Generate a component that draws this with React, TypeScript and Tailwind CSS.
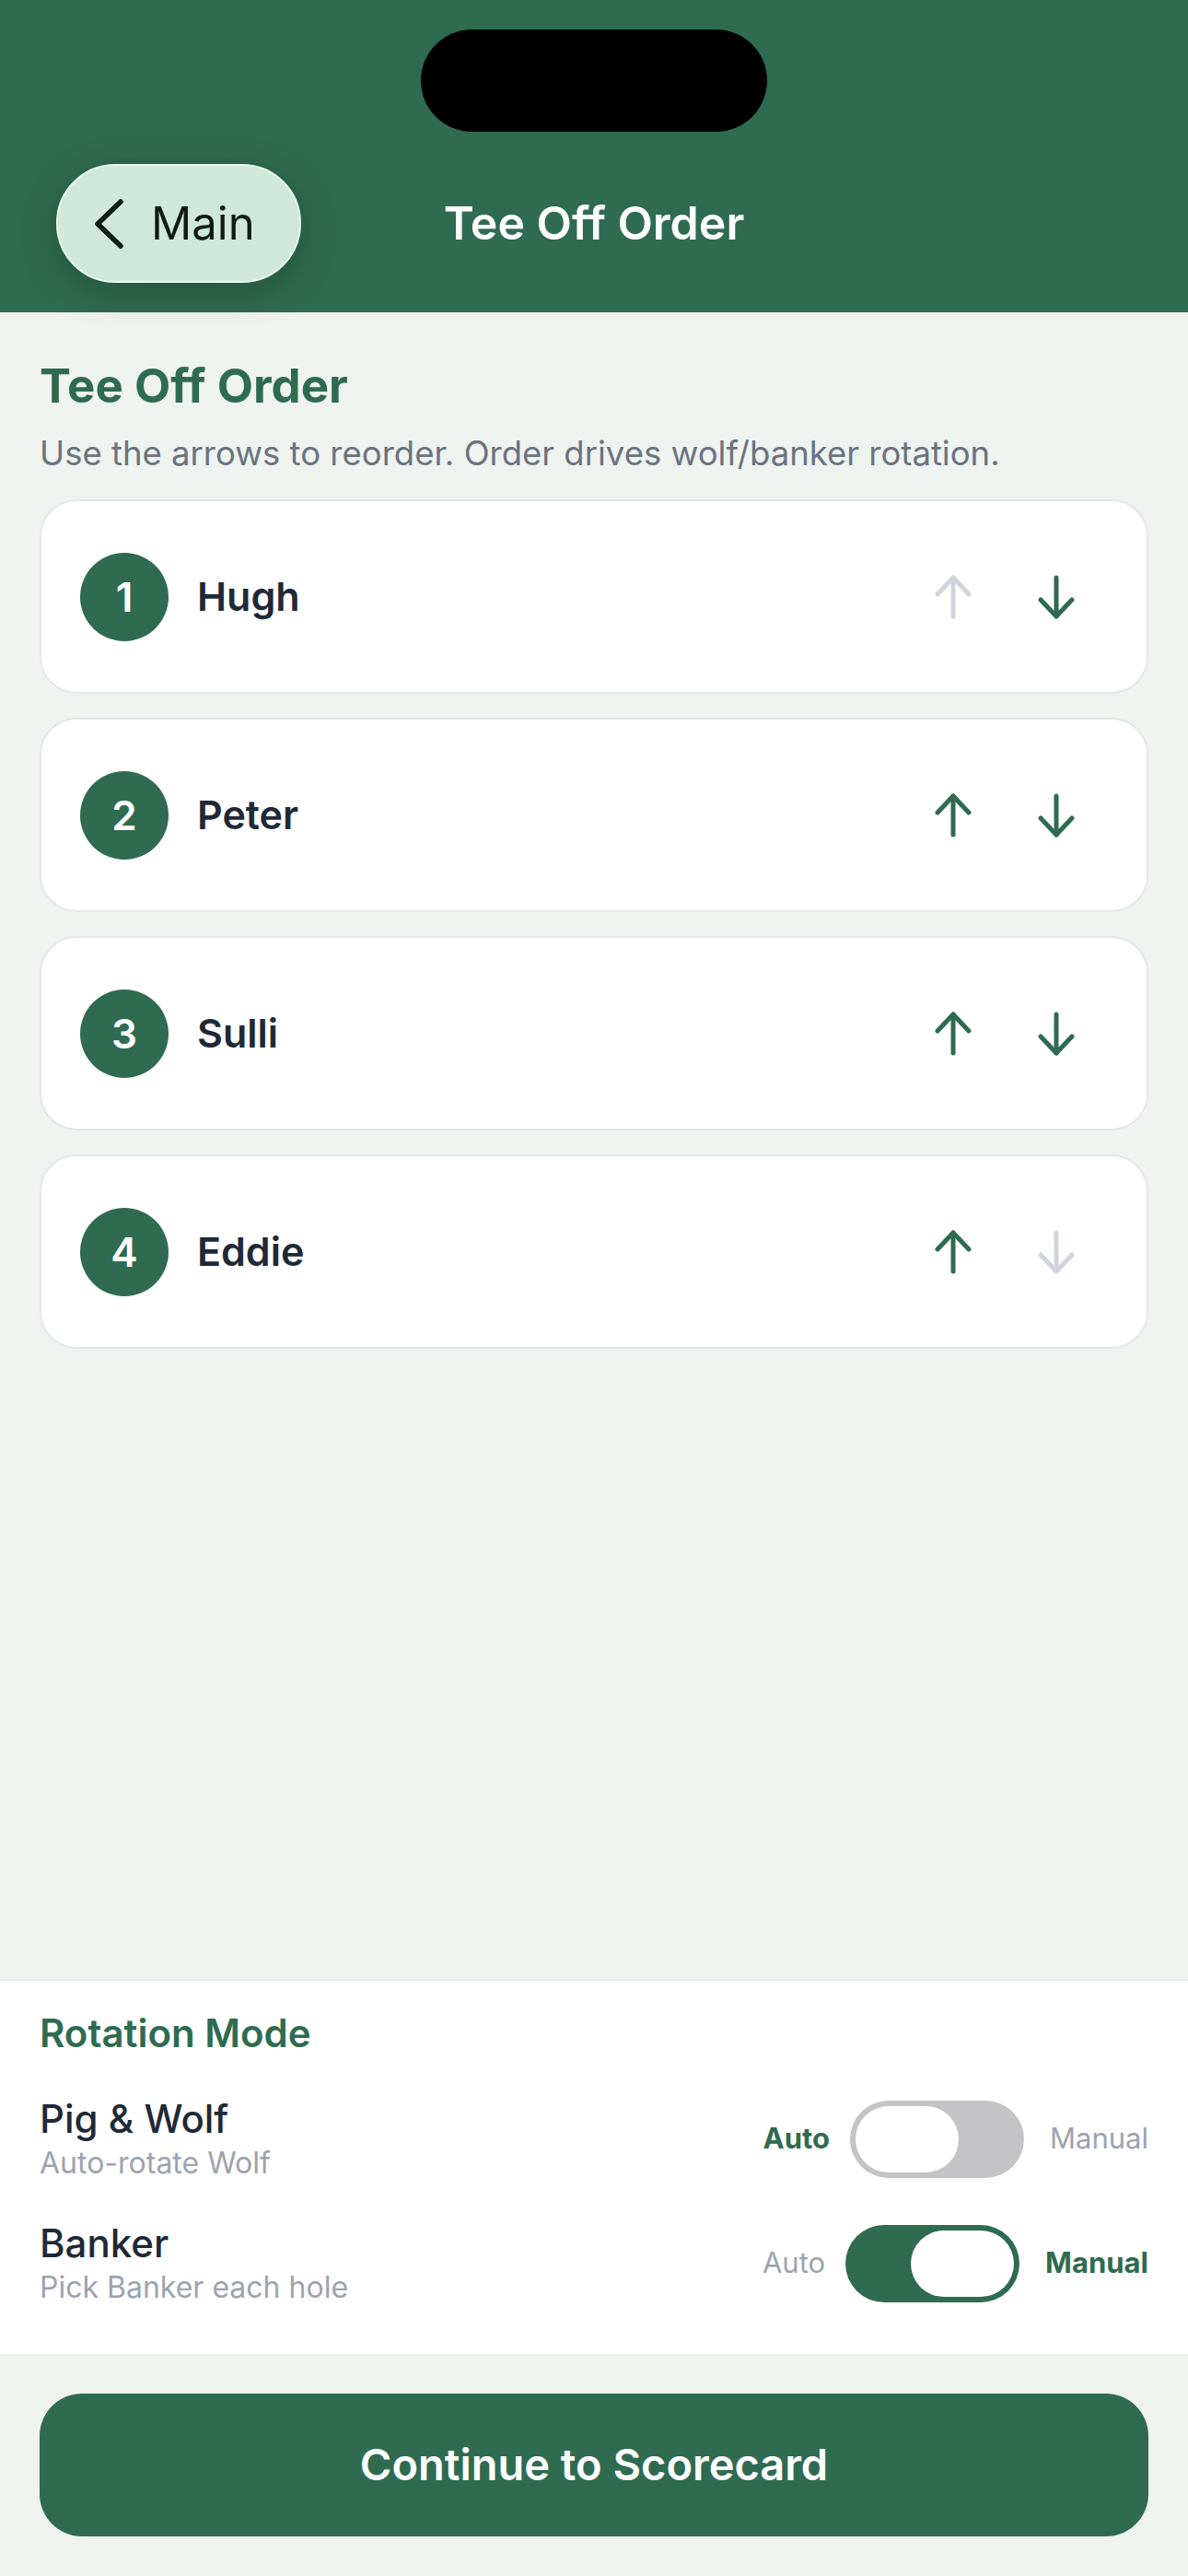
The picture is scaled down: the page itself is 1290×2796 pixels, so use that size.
import React from "react";

const FONT = { fontFamily: 'Inter, "Noto Sans", "Liberation Sans", sans-serif' };

function Arrow({ dir, enabled }: { dir: "up" | "down"; enabled: boolean }) {
  const color = enabled ? "#2F6B50" : "#D1D5DB";
  return (
    <svg width="40" height="50" viewBox="0 0 40 50" fill="none" stroke={color} strokeWidth="5" strokeLinecap="round" strokeLinejoin="round" style={{ transform: dir === "down" ? "rotate(180deg)" : undefined }}>
      <path d="M20 4 V46" />
      <path d="M3 22 L20 4 L37 22" />
    </svg>
  );
}

function PlayerCard({ n, name, first, last }: { n: number; name: string; first: boolean; last: boolean }) {
  return (
    <div className="h-[211px] bg-white border-2 border-[#E4E7EA] rounded-[40px] flex items-center pl-[42px] pr-[42px]">
      <div className="w-[96px] h-[96px] rounded-full bg-[#2F6B50] flex items-center justify-center text-white text-[44px] font-semibold">
        {n}
      </div>
      <div className="ml-[31px] text-[43px] font-semibold text-[#1F2937] flex-1">{name}</div>
      <div className="w-[112px] flex items-center justify-center"><Arrow dir="up" enabled={!first} /></div>
      <div className="w-[112px] flex items-center justify-center"><Arrow dir="down" enabled={!last} /></div>
    </div>
  );
}

function Toggle({ on }: { on: boolean }) {
  return (
    <div className={`w-[189px] h-[84px] rounded-full p-[6px] flex ${on ? "bg-[#2F6B50] justify-end" : "bg-[#C4C4C6] justify-start"}`}>
      <div className="w-[112px] h-[72px] rounded-full bg-white" />
    </div>
  );
}

function ModeRow({ title, sub, manual }: { title: string; sub: string; manual: boolean }) {
  return (
    <div className="flex items-center">
      <div className="flex-1 flex flex-col gap-[3px]">
        <div className="text-[42px] leading-[50px] font-medium text-[#1F2937]">{title}</div>
        <div className="text-[32px] leading-[40px] text-[#9CA3AF]">{sub}</div>
      </div>
      <div className="flex items-center">
        <span className={`text-[31px] mr-[22px] ${manual ? "text-[#9CA3AF]" : "text-[#2F6B50] font-bold"}`}>Auto</span>
        <Toggle on={manual} />
        <span className={`text-[31px] ml-[28px] ${manual ? "text-[#2F6B50] font-bold" : "text-[#9CA3AF]"}`}>Manual</span>
      </div>
    </div>
  );
}

export default function App() {
  const players = ["Hugh", "Peter", "Sulli", "Eddie"];
  return (
    <div className="w-[1290px] h-[2796px] flex flex-col bg-[#EEF3EF]" style={FONT}>
      <header className="bg-[#2F6B50] h-[339px] flex flex-col items-center pt-[32px] shrink-0">
        <div className="w-[376px] h-[111px] rounded-full bg-black" />
        <div className="w-full grid grid-cols-[1fr_auto_1fr] items-center mt-[35px] px-[61px]">
          <div className="flex">
            <div className="h-[129px] rounded-[64px] bg-[#D0E7DC] border-2 border-[#E8F8EF] flex items-center pl-[37px] pr-[48px] gap-[28px] shadow-[0_10px_40px_rgba(0,0,0,0.22)]">
              <svg width="36" height="56" viewBox="0 0 36 56" fill="none" stroke="#0F1F17" strokeWidth="5.5" strokeLinecap="round" strokeLinejoin="round">
                <path d="M31 4 L6 28 L31 52" />
              </svg>
              <span className="text-[49px] text-[#0F1A14]">Main</span>
            </div>
          </div>
          <div className="text-white text-[50px] font-semibold">Tee Off Order</div>
          <div />
        </div>
      </header>

      <main className="flex-1 px-[43px] pt-[49px]">
        <h1 className="text-[51px] leading-[62px] font-bold text-[#2F6B50]">Tee Off Order</h1>
        <p className="mt-[18px] text-[36.5px] leading-[48px] text-[#6B7280]">
          Use the arrows to reorder. Order drives wolf/banker rotation.
        </p>
        <div className="mt-[26px] flex flex-col gap-[26px]">
          {players.map((p, i) => (
            <PlayerCard key={p} n={i + 1} name={p} first={i === 0} last={i === players.length - 1} />
          ))}
        </div>
      </main>

      <section className="bg-white border-t-2 border-[#E5E7EB] px-[43px] pt-[31px] pb-[52px] shrink-0">
        <div className="text-[42px] leading-[52px] font-semibold text-[#2F6B50]">Rotation Mode</div>
        <div className="mt-[42px] flex flex-col gap-[42px]">
          <ModeRow title="Pig & Wolf" sub="Auto-rotate Wolf" manual={false} />
          <ModeRow title="Banker" sub="Pick Banker each hole" manual={true} />
        </div>
      </section>

      <div className="px-[43px] pt-[43px] pb-[43px] shrink-0">
        <button className="w-full h-[155px] rounded-[46px] bg-[#2F6B50] text-white text-[47px] font-semibold">
          Continue to Scorecard
        </button>
      </div>
    </div>
  );
}
